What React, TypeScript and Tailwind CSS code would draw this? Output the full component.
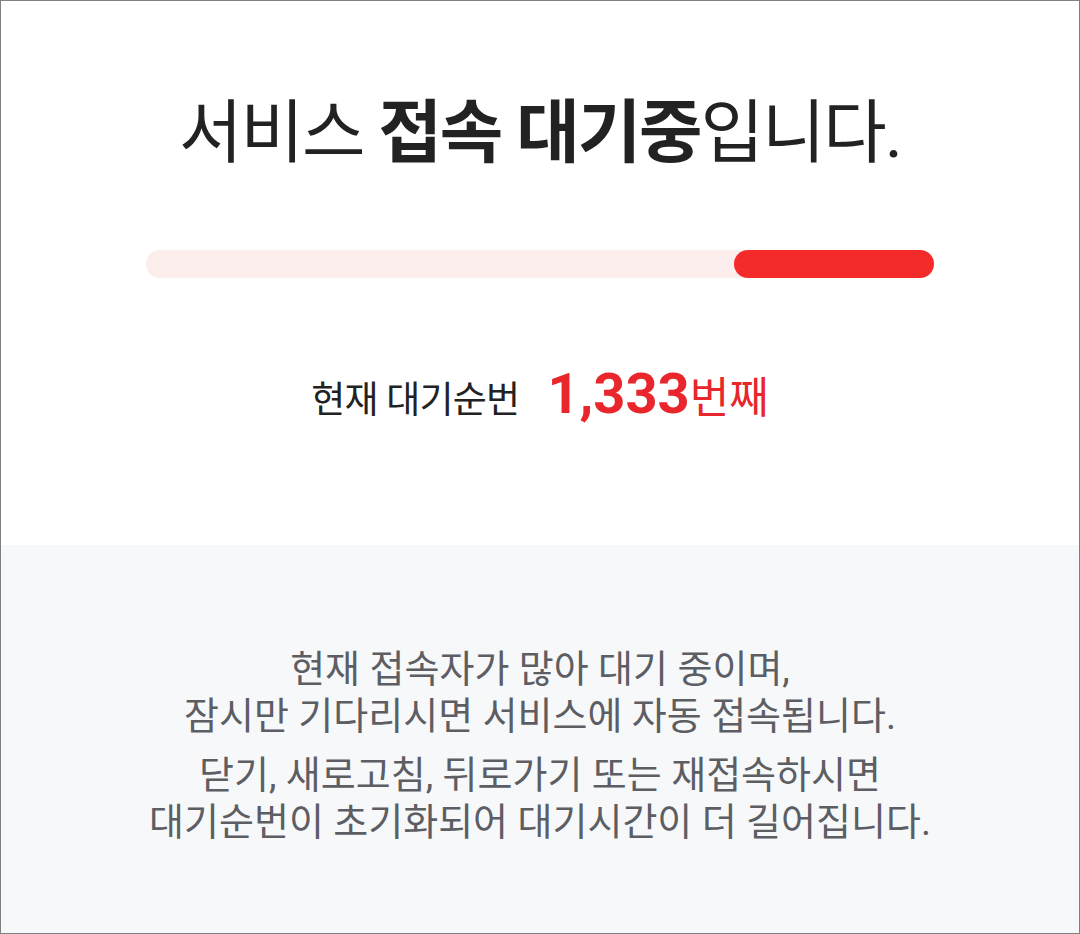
import React from "react";

const font = { fontFamily: "Roboto, 'Noto Sans CJK KR', sans-serif" };

export default function App() {
  const progress = 200; // px of the filled segment
  return (
    <div
      className="w-[1080px] h-[934px] border border-[#808080] flex flex-col bg-white"
      style={font}
    >
      <section className="h-[544px] flex flex-col items-center pt-[93px]">
        <h1 className="text-[69px] leading-[80px] tracking-[-0.03em] text-[#222222] font-normal">
          서비스 <span className="font-bold">접속 대기중</span>입니다.
        </h1>

        <div className="mt-[76px] w-[788px] h-[28px] rounded-full bg-[#fdeeee] flex justify-end">
          <div
            className="h-full rounded-full bg-[#f52b2b]"
            style={{ width: progress }}
          />
        </div>

        <div className="mt-[74px] h-[60px] flex items-baseline">
          <span className="text-[37px] tracking-[-0.02em] text-[#222222]">
            현재 대기순번
          </span>
          <span className="ml-[28px] text-[56px] font-bold text-[#e8262c]">
            1,333
          </span>
          <span className="text-[43px] text-[#e8262c]">번째</span>
        </div>
      </section>

      <section className="flex-1 bg-[#f7f8fa] flex flex-col items-center pt-[101px] text-[38px] leading-[47px] text-[#5c5e63] text-center">
        <p>
          현재 접속자가 많아 대기 중이며,
          <br />
          잠시만 기다리시면 서비스에 자동 접속됩니다.
        </p>
        <p className="mt-[12px]">
          닫기, 새로고침, 뒤로가기 또는 재접속하시면
          <br />
          대기순번이 초기화되어 대기시간이 더 길어집니다.
        </p>
      </section>
    </div>
  );
}
